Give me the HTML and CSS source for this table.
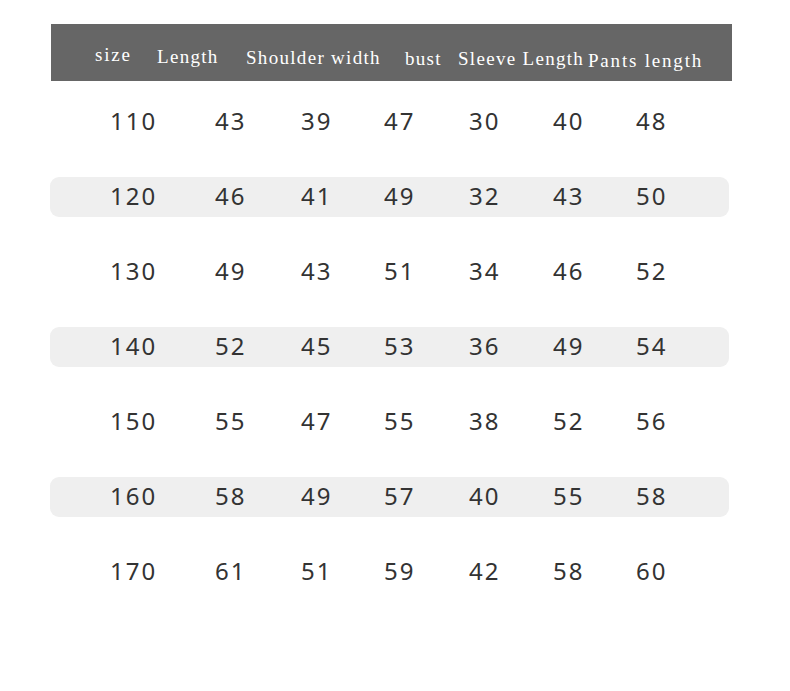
FILE: index.html
```html
<!DOCTYPE html>
<html>
<head>
<meta charset="utf-8">
<link rel="stylesheet" href="styles.css">
</head>
<body>
<div class="chart">
  <div class="head">
    <span class="h h1">size</span>
    <span class="h h2">Length</span>
    <span class="h h3">Shoulder width</span>
    <span class="h h4">bust</span>
    <span class="h h5">Sleeve Length</span>
    <span class="h h6">Pants length</span>
  </div>
  <div class="rows">
    <div class="row"><span>110</span><span>43</span><span>39</span><span>47</span><span>30</span><span>40</span><span>48</span></div>
    <div class="row alt"><span>120</span><span>46</span><span>41</span><span>49</span><span>32</span><span>43</span><span>50</span></div>
    <div class="row"><span>130</span><span>49</span><span>43</span><span>51</span><span>34</span><span>46</span><span>52</span></div>
    <div class="row alt"><span>140</span><span>52</span><span>45</span><span>53</span><span>36</span><span>49</span><span>54</span></div>
    <div class="row"><span>150</span><span>55</span><span>47</span><span>55</span><span>38</span><span>52</span><span>56</span></div>
    <div class="row alt"><span>160</span><span>58</span><span>49</span><span>57</span><span>40</span><span>55</span><span>58</span></div>
    <div class="row"><span>170</span><span>61</span><span>51</span><span>59</span><span>42</span><span>58</span><span>60</span></div>
  </div>
</div>
</body>
</html>
```
FILE: styles.css
```css
html, body {
  margin: 0;
  padding: 0;
  background: #ffffff;
}
.chart {
  padding: 24px 0 0 50px;
  width: 682px;
}
.head {
  margin-left: 1px;
  width: 681px;
  height: 57px;
  background: #666666;
  display: grid;
  grid-template-columns: 62px 89px 159px 53px 130px auto;
  padding-left: 44px;
  box-sizing: border-box;
  font-family: "Liberation Serif", "DejaVu Serif", serif;
  font-size: 19px;
  color: #ffffff;
  letter-spacing: 1.3px;
  white-space: nowrap;
}
.h {
  line-height: 20px;
}
.h1 { padding-top: 21px; letter-spacing: 1.8px; }
.h2 { padding-top: 23px; }
.h3 { padding-top: 24px; }
.h4 { padding-top: 25px; }
.h5 { padding-top: 25px; }
.h6 { padding-top: 27px; letter-spacing: 1.8px; }
.rows {
  margin-top: 21px;
  display: flex;
  flex-direction: column;
  gap: 35px;
  width: 679px;
}
.row {
  height: 40px;
  box-sizing: border-box;
  padding-bottom: 3px;
  border-radius: 9px;
  display: grid;
  grid-template-columns: 105px 86px 83px 85px 84px 83px auto;
  padding-left: 60px;
  align-items: center;
  font-family: "Noto Sans", "Open Sans", sans-serif;
  font-size: 24px;
  letter-spacing: 2px;
  color: #333333;
}
.alt {
  background: #efefef;
}
```
